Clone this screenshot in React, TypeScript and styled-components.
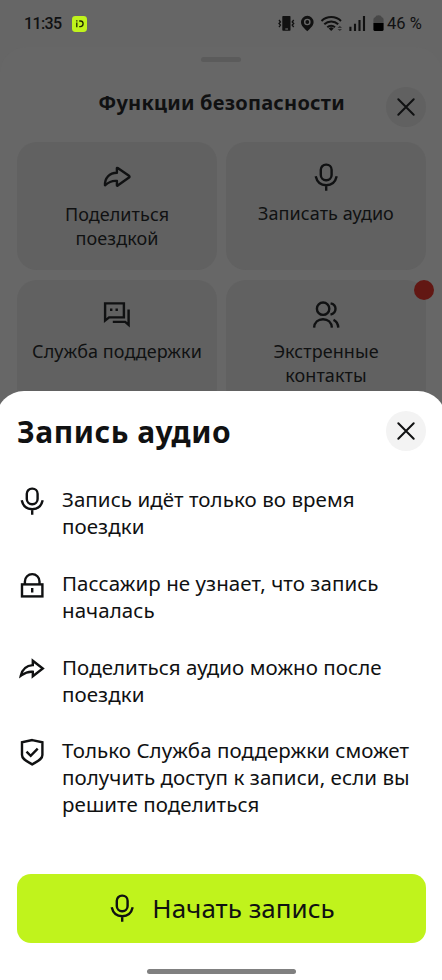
import React from "react";
import styled, { createGlobalStyle } from "styled-components";

const Global = createGlobalStyle`
  * { box-sizing: border-box; }
  body { margin: 0; background: #666; }
  button { border: 0; padding: 0; font: inherit; color: inherit; }
`;

const Screen = styled.main`
  position: relative;
  width: 442px;
  height: 980px;
  overflow: hidden;
  background: #666;
  color: #101112;
  font-family: "Noto Sans", sans-serif;
`;

const StatusBar = styled.header`
  display: flex;
  align-items: center;
  height: 47px;
  padding: 0 19px 0 24px;
`;

const Clock = styled.span`
  width: 48px;
  font: 500 16px/20px Roboto, sans-serif;
  letter-spacing: -0.6px;
  white-space: nowrap;
`;

const StatusIcons = styled.div`
  display: flex;
  align-items: center;
  margin-left: auto;
  svg { display: block; }
`;

const Battery = styled.span`
  width: 36px;
  margin-left: 3px;
  font: 400 16.5px/20px Roboto, sans-serif;
  white-space: nowrap;
`;

const SafetyPanel = styled.section`
  height: 933px;
  padding: 10px 16px 0 17px;
  border-radius: 26px 26px 0 0;
  background: #676767;
`;

const Handle = styled.div`
  width: 40px;
  height: 5px;
  margin: 0 0 0 184px;
  border-radius: 3px;
  background: #5b5b5b;
`;

const PanelHeader = styled.div`
  display: grid;
  grid-template-columns: 40px 1fr 40px;
  align-items: center;
  height: 40px;
  margin-top: 24.5px;
`;

const PanelTitle = styled.h2`
  grid-column: 2;
  margin: -8px 0 0;
  font-size: 20px;
  line-height: 28px;
  font-weight: 700;
  letter-spacing: 0.24px;
  text-align: center;
  white-space: nowrap;
`;

const CloseButton = styled.button<{ $dim?: boolean }>`
  display: grid;
  place-items: center;
  width: 40px;
  height: 40px;
  border-radius: 50%;
  background: ${(p) => (p.$dim ? "#616161" : "#f3f3f3")};
`;

const Cards = styled.div`
  display: grid;
  grid-template-columns: 200px 200px;
  grid-auto-rows: 128px;
  gap: 10px 9px;
  margin-top: 15.5px;
`;

const Card = styled.div<{ $drop?: number }>`
  position: relative;
  display: flex;
  flex-direction: column;
  align-items: center;
  padding-top: 21px;
  border-radius: 20px;
  background: #616161;
  font-size: 18px;
  line-height: 23.5px;
  letter-spacing: 0.06px;
  text-align: center;
  white-space: pre-line;
  svg { flex: none; margin-bottom: ${(p) => 11 + (p.$drop ?? 0)}px; }
`;

const AlertDot = styled.i`
  position: absolute;
  top: -0.5px;
  right: -7.5px;
  width: 20px;
  height: 20px;
  border-radius: 50%;
  background: #621713;
`;

const Sheet = styled.section`
  position: absolute;
  inset: 391px -4px 0;
  display: flex;
  flex-direction: column;
  padding: 19.5px 20px 6px 21px;
  border-radius: 28px 28px 0 0;
  background: #fff;
`;

const SheetHeader = styled.div`
  display: flex;
  align-items: center;
  justify-content: space-between;
  height: 40px;
`;

const SheetTitle = styled.h1`
  margin: 2px 0 0;
  font-size: 30px;
  line-height: 40px;
  font-weight: 700;
  letter-spacing: 0.52px;
  white-space: nowrap;
`;

const Facts = styled.ul`
  display: flex;
  flex-direction: column;
  gap: 29.8px;
  margin: 35.6px 0 0;
  padding: 0;
  list-style: none;
`;

const Fact = styled.li`
  display: grid;
  grid-template-columns: 45px 1fr;
  font-size: 20.5px;
  line-height: 27px;
  letter-spacing: 0.07px;
  white-space: pre;
  svg { margin: 0.8px 0 0 1px; }
`;

const StartButton = styled.button`
  display: flex;
  align-items: center;
  justify-content: center;
  gap: 16px;
  height: 69px;
  margin-top: auto;
  padding-bottom: 1px;
  border-radius: 14px;
  background: #c0f31c;
  font-size: 26px;
  white-space: nowrap;
`;

const HomeIndicator = styled.div`
  width: 149px;
  height: 5px;
  margin: 26px 0 0 130px;
  border-radius: 3px;
  background: #808080;
`;

const Stroke = ({ children, round }: { children: React.ReactNode; round?: boolean }) => (
  <svg width="28" height="28" viewBox="0 0 28 28" fill="none" stroke="#101112" strokeWidth="2.4"
    strokeLinejoin={round ? "round" : "miter"}>{children}</svg>
);

const Mic = () => (
  <Stroke>
    <rect x="8.8" y="1.6" width="10.8" height="15.6" rx="5.2" />
    <path d="M3.7 13.2C5 18.8 9 22.2 14.2 22.2S23.4 18.8 24.7 13.2M14.2 22.2V27.8" />
  </Stroke>
);
const ShareRound = () => (
  <Stroke round><path d="M13.9 5.2Q13.9 4.6 14.7 5L26 12.8Q27 13.7 26 14.6L14.7 22.6Q13.9 23 13.9 22.3V18C8.5 17.2 5 19.7 2 22.3C1.7 14.8 6.5 9.9 13.9 9.7Z" /></Stroke>
);
const Share = () => (
  <Stroke><path d="M14.8 6.7L24.8 14.5L14.8 22.3V17.8C9 17.1 5.8 19.7 2.8 21.8C4.2 15.3 8 11.5 14.8 11.1Z" /></Stroke>
);
const Lock = () => (
  <Stroke>
    <rect x="4" y="13.4" width="20.4" height="12" />
    <path d="M6.9 13.4V10.4A7.3 7.3 0 0 1 21.5 10.4V13.4M14.2 17V21.6" />
  </Stroke>
);
const Shield = () => (
  <Stroke>
    <path d="M14.2 2.1L24.4 4.3V17C24.4 21.6 19 23.4 14.2 26.4C9.4 23.4 4 21.6 4 17V4.3Z" />
    <path d="M8.5 13.7L12.7 17.9L19.7 10.6" />
  </Stroke>
);
const Chat = () => (
  <Stroke>
    <path d="M2.1 19.6V2.4H20.9V16.4H6.1L2.1 19.6Z" />
    <path d="M25.6 8.6V23.8L22.2 20.9H9.8" />
    <path d="M7 8.7H9.4M12.5 8.7H14.9" strokeWidth="2.6" />
  </Stroke>
);
const People = () => (
  <Stroke>
    <circle cx="11.1" cy="7.7" r="6.2" />
    <path d="M2.1 26.6C2.5 21.3 6.2 18.2 11 18.2S19.5 21.3 19.9 26.6M18.6 2.4C21.5 3 23.5 5 23.5 7.8S21.5 12.9 18.5 13.6M21.5 18.9C24.5 20.3 26 23 26.3 26.6" />
  </Stroke>
);
const Cross = () => (
  <svg width="20" height="20" viewBox="0 0 20 20" fill="none" stroke="#101112" strokeWidth="2" strokeLinecap="round">
    <path d="M2.3 2.3L17.7 17.7M17.7 2.3L2.3 17.7" />
  </svg>
);
const AppBadge = () => (
  <svg width="15" height="16" viewBox="0 0 15 16">
    <rect width="15" height="16" rx="3.4" fill="#c0f31c" />
    <path d="M4.8 6.5V11.2M4.8 4.2V5.5M7.2 5H8.3A2.8 2.8 0 0 1 8.3 10.6H7.2" fill="none" stroke="#1c2600" strokeWidth="1.3" />
  </svg>
);
const StatusGlyphs = () => (
  <svg width="106" height="18" viewBox="278 15 106 18" fill="none" stroke="#111">
    <rect x="282.3" y="16" width="8.2" height="14.8" rx="0.8" fill="#111" stroke="none" />
    <path d="M285.3 29H288" stroke="#777" strokeWidth="1" />
    <path d="M279 20L280.5 22L279 23.5L280.5 25L279 27M293.7 20L292.2 22L293.7 23.5L292.2 25L293.7 27" strokeWidth="1.3" />
    <path d="M307.3 31.3C304.5 28.5 301 26 301 22.1A6.3 6.3 0 0 1 313.6 22.1C313.6 26 310 28.5 307.3 31.3Z" fill="#111" stroke="none" />
    <circle cx="307.3" cy="22" r="2.6" stroke="#686868" strokeWidth="1.4" />
    <path d="M321.5 21A14.2 14.2 0 0 1 341 21M324.3 24.3A10 10 0 0 1 338.2 24.3M327.3 27.3A5.8 5.8 0 0 1 335 27.3" strokeWidth="2" />
    <path d="M328.7 28.4Q331.2 26.3 333.7 28.4L331.2 31Z" fill="#111" stroke="none" />
    <path d="M337.5 27.9L339.8 25.7L342 27.9ZM337.5 28.9L339.8 31.1L342 28.9Z" fill="#333" stroke="none" />
    <path d="M350.4 31V26.8M355 31V23.8M359.5 31V20M364 31V16" strokeWidth="2.1" />
    <path d="M373.4 23V19.5Q373.4 17.6 375.2 17.2Q375.5 15.3 378.5 15.3T381.8 17.2Q383.6 17.6 383.6 19.5V23Z" fill="#484848" stroke="none" />
    <path d="M373.4 23H383.6V29.5Q383.6 31 382 31H375Q373.4 31 373.4 29.5Z" fill="#000" stroke="none" />
  </svg>
);

const facts = [
  { icon: <Mic />, text: "Запись идёт только во время\nпоездки" },
  { icon: <Lock />, text: "Пассажир не узнает, что запись\nначалась" },
  { icon: <Share />, text: "Поделиться аудио можно после\nпоездки" },
  { icon: <Shield />, text: "Только Служба поддержки сможет\nполучить доступ к записи, если вы\nрешите поделиться" },
];

export default function App() {
  return (
    <Screen>
      <Global />
      <StatusBar>
        <Clock>11:35</Clock>
        <AppBadge />
        <StatusIcons>
          <StatusGlyphs />
          <Battery>46 %</Battery>
        </StatusIcons>
      </StatusBar>
      <SafetyPanel>
        <Handle />
        <PanelHeader>
          <PanelTitle>Функции безопасности</PanelTitle>
          <CloseButton $dim aria-label="Закрыть"><Cross /></CloseButton>
        </PanelHeader>
        <Cards>
          <Card $drop={1}><ShareRound />{"Поделиться\nпоездкой"}</Card>
          <Card><Mic />Записать аудио</Card>
          <Card><Chat />Служба поддержки</Card>
          <Card><People />{"Экстренные\nконтакты"}<AlertDot /></Card>
        </Cards>
      </SafetyPanel>
      <Sheet>
        <SheetHeader>
          <SheetTitle>Запись аудио</SheetTitle>
          <CloseButton aria-label="Закрыть"><Cross /></CloseButton>
        </SheetHeader>
        <Facts>
          {facts.map((f) => <Fact key={f.text}>{f.icon}<span>{f.text}</span></Fact>)}
        </Facts>
        <StartButton><Mic />Начать запись</StartButton>
        <HomeIndicator />
      </Sheet>
    </Screen>
  );
}
